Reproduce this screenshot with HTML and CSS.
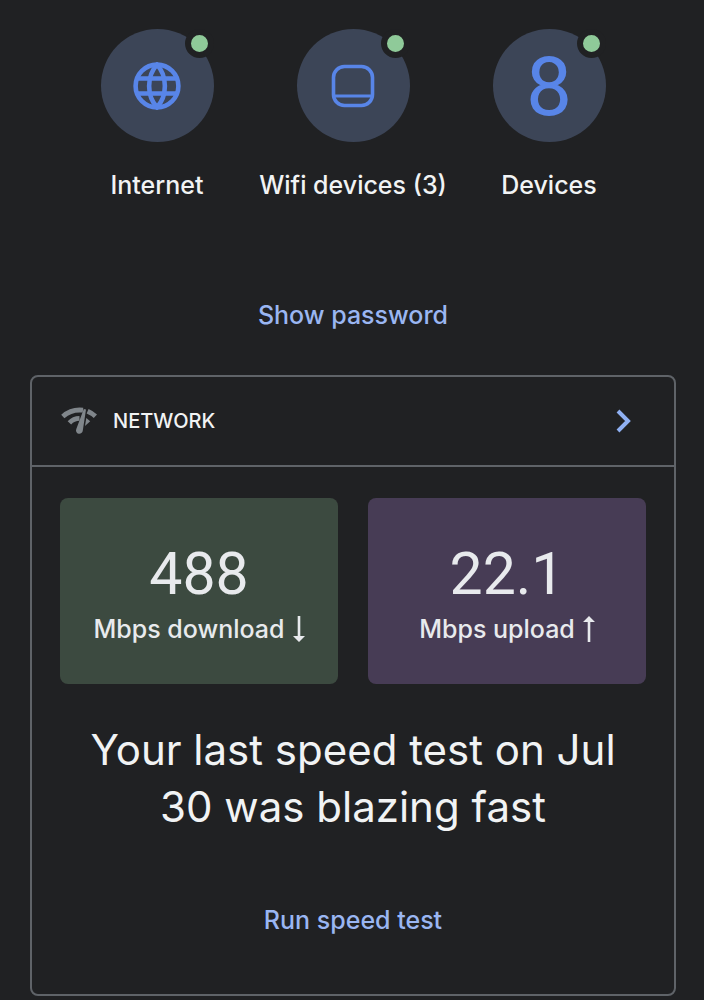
FILE: index.html
```html
<!DOCTYPE html>
<html lang="en">
<head>
<meta charset="utf-8">
<meta name="viewport" content="width=device-width, initial-scale=1">
<title>Wifi</title>
<link rel="stylesheet" href="styles.css">
</head>

<body>

<nav class="status">
  <a class="status-item" href="#internet">
    <span class="circle">
      <svg width="48" height="48" viewBox="0 0 48 48" fill="none" stroke="#5885e8" stroke-width="4.6">
        <circle cx="24" cy="24" r="21.4"/>
        <path d="M24 2.8C13.500 14 13.500 34 24 45.200C34.500 34 34.500 14 24 2.800Z"/>
        <path d="M4.500 16.500h39M4.500 31.500h39"/>
      </svg>
      <span class="dot"></span>
    </span>
    <span class="label">Internet</span>
  </a>
  <a class="status-item" href="#points">
    <span class="circle">
      <svg width="44" height="44" viewBox="0 0 44 44" fill="none" stroke="#5885e8" stroke-width="3.6">
        <rect x="2.500" y="2.500" width="39" height="39" rx="11"/>
        <path d="M3 32h38" stroke-width="3"/>
      </svg>
      <span class="dot"></span>
    </span>
    <span class="label">Wifi devices (3)</span>
  </a>
  <a class="status-item" href="#devices">
    <span class="circle">
      <span class="count">8</span>
      <span class="dot"></span>
    </span>
    <span class="label">Devices</span>
  </a>
</nav>

<button class="text-button show-password" type="button">Show password</button>

<section class="card">
  <a class="card-header" href="#network">
    <svg width="36" height="28" viewBox="0 0 36 28" fill="none" stroke="#80868b">
      <path d="M1.800 9.500Q10.500 1.800 22 3.200" stroke-width="4.800"/>
      <path d="M26.600 4.300Q31 6.200 34.400 9.300" stroke-width="4.800"/>
      <path d="M8.400 15.800Q12.500 11.500 18.500 11.400" stroke-width="4.800"/>
      <path d="M25.300 11L29.200 14.200L24 19Z" fill="#80868b" stroke="none"/>
      <path d="M22.800 2L25 2.600L21.800 23.600A3.400 3.400 0 1 1 15.300 22Z" fill="#80868b" stroke="none"/>
    </svg>
    <span class="card-title">NETWORK</span>
    <svg class="chevron" width="24" height="24" viewBox="0 0 24 24" fill="none" stroke="#8fb0f2" stroke-width="4">
      <path d="M6 2l10 10L6 22"/>
    </svg>
  </a>

  <div class="card-body">
    <div class="speeds">
      <div class="speed download">
        <span class="value">488</span>
        <span class="unit">Mbps download
          <svg width="12" height="26" viewBox="0 0 12 26"><path d="M4.700 0h2.600v20H12l-6 6-6-6h4.700z" fill="#e8eaed"/></svg>
        </span>
      </div>
      <div class="speed upload">
        <span class="value">22.1</span>
        <span class="unit">Mbps upload
          <svg width="12" height="26" viewBox="0 0 12 26"><path d="M4.700 26h2.600V6H12L6 0 0 6h4.700z" fill="#e8eaed"/></svg>
        </span>
      </div>
    </div>

    <h2 class="result">Your last speed test on Jul 30 was blazing fast</h2>

    <button class="text-button" type="button">Run speed test</button>
  </div>
</section>

</body>
</html>
```
FILE: styles.css
```css
* {
  box-sizing: border-box;
}

body {
  margin: 0;
  padding: 29px 28px 5px 30px;
  background: #202123;
  color: #f1f3f4;
  font-family: Inter, Roboto, sans-serif;
  font-size: 25px;
  line-height: 32px;
}

a {
  color: inherit;
  text-decoration: none;
}

svg {
  display: block;
  flex: none;
}

/* status row */
.status {
  display: grid;
  grid-template-columns: repeat(3, 1fr);
  padding: 0 29px;
}

.status-item {
  display: flex;
  flex-direction: column;
  align-items: center;
  gap: 27px;
}

.circle {
  position: relative;
  display: flex;
  align-items: center;
  justify-content: center;
  width: 113px;
  height: 113px;
  border-radius: 50%;
  background: #3c4557;
}

.dot {
  position: absolute;
  top: 0;
  right: 0;
  width: 29px;
  height: 29px;
  border: 6px solid #202123;
  border-radius: 50%;
  background: #8fca99;
}

.count {
  padding-top: 3px;
  color: #5885e8;
  font-family: Roboto, sans-serif;
  font-size: 82px;
  line-height: 113px;
}

.label {
  font-weight: 500;
  white-space: nowrap;
}

.text-button {
  display: block;
  margin: 0 auto;
  padding: 8px 16px;
  border: 0;
  background: none;
  color: #9ab6f2;
  font: inherit;
  font-weight: 500;
  cursor: pointer;
}

.show-password {
  margin-top: 90px;
  margin-bottom: 36px;
}

/* network card */
.card {
  border: 2px solid #5f6368;
  border-radius: 8px;
}

.card-header {
  display: flex;
  align-items: center;
  gap: 16px;
  height: 90px;
  padding: 0 38px 0 29px;
  border-bottom: 2px solid #5f6368;
}

.card-title {
  font-size: 20px;
  font-weight: 500;
}

.chevron {
  margin-left: auto;
}

.card-body {
  padding: 31px 28px 50px;
}

.speeds {
  display: grid;
  grid-template-columns: 1fr 1fr;
  gap: 30px;
}

.speed {
  display: flex;
  flex-direction: column;
  align-items: center;
  height: 186px;
  padding-top: 44px;
  border-radius: 8px;
  color: #e8eaed;
}

.download {
  background: #3c4a40;
}

.upload {
  background: #473c55;
}

.value {
  font-family: Roboto, sans-serif;
  font-size: 59px;
  line-height: 64px;
}

.unit {
  display: flex;
  align-items: center;
  gap: 8px;
  margin-top: 7px;
  font-weight: 500;
}

.result {
  margin: 37px 0 61px;
  font-size: 42px;
  font-weight: 400;
  line-height: 57px;
  text-align: center;
}
```
